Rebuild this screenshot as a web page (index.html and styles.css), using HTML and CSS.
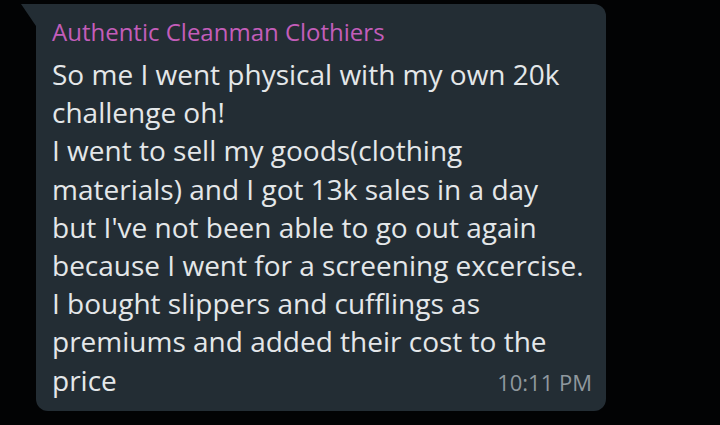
FILE: index.html
```html
<!doctype html>
<html>

<head>
    <title>Chat</title>
    <meta charset="utf-8">
    <link rel="stylesheet" href="styles.css">
</head>

<body>
    <div class="chat">
        <div class="bubble">
            <div class="sender">Authentic Cleanman Clothiers</div>
            <div class="text">
                So me I went physical with my own 20k<br>
                challenge oh!<br>
                I went to sell my goods(clothing<br>
                materials) and I got 13k sales in a day<br>
                but I've not been able to go out again<br>
                because I went for a screening excercise.<br>
                I bought slippers and cufflings as<br>
                premiums and added their cost to the
            </div>
            <div class="last">
                <span>price</span>
                <span class="time">10:11 PM</span>
            </div>
        </div>
    </div>
</body>

</html>
```

FILE: styles.css
```css
* {
    box-sizing: border-box;
}

body {
    margin: 0;
    width: 720px;
    height: 425px;
    overflow: hidden;
    background: #020304;
    font-family: "Open Sans", "Noto Sans", sans-serif;
}

.chat {
    padding: 4px 0 0 36px;
}

.bubble {
    position: relative;
    width: 570px;
    height: 407px;
    background: #232d34;
    border-radius: 0 12px 12px 12px;
    padding: 13px 14px 0 16px;
}

.bubble::before {
    content: "";
    position: absolute;
    top: 0;
    left: -15px;
    border-top: 22px solid #232d34;
    border-left: 15px solid transparent;
}

.sender {
    color: #c35dba;
    font-size: 24px;
    line-height: 30px;
}

.text {
    color: #e4e7e9;
    font-size: 28px;
    line-height: 38.2px;
    white-space: nowrap;
    margin-top: 8px;
}

.last {
    display: flex;
    justify-content: space-between;
    align-items: baseline;
    color: #e4e7e9;
    font-size: 28px;
    line-height: 38px;
}

.time {
    color: #8f989e;
    font-size: 22px;
}
```
